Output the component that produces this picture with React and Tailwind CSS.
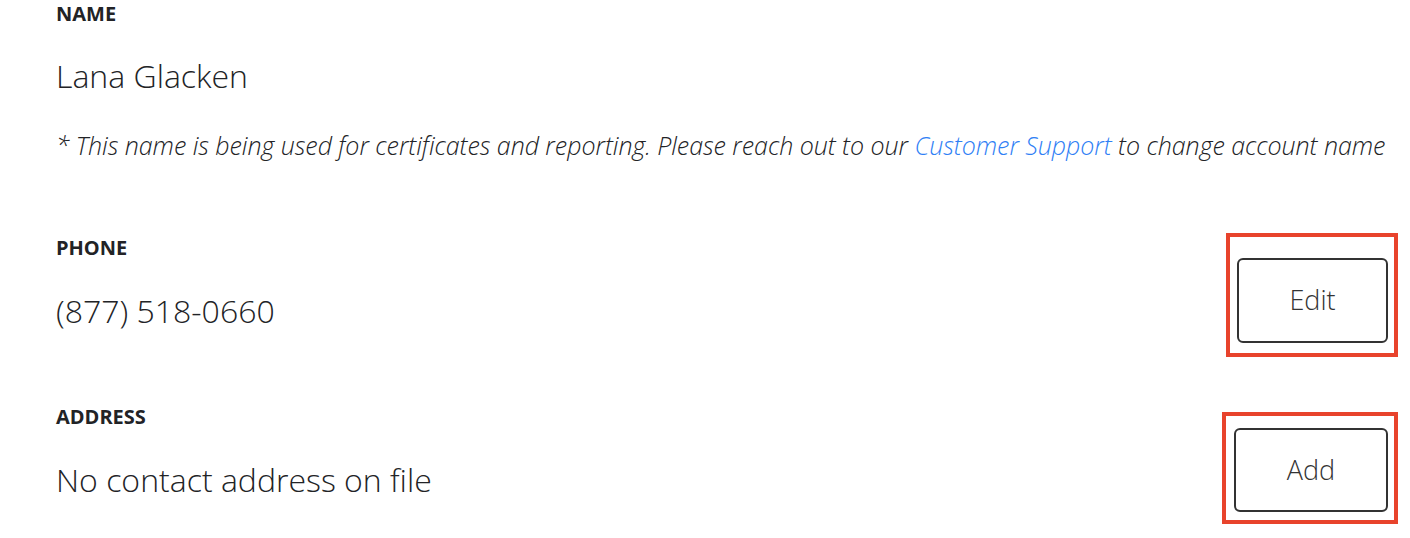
export default function App() {
  const font = { fontFamily: '"Open Sans", "Noto Sans", sans-serif' };
  return (
    <div className="w-[1410px] h-[538px] bg-white text-[#222326] pl-[56px] pr-[12px] pt-[2px] overflow-hidden" style={font}>
      <div className="text-[20px] leading-[24px] font-bold">NAME</div>
      <div className="mt-[30px] text-[32px] leading-[40px] font-light">Lana Glacken</div>
      <div className="mt-[33px] text-[25px] leading-[32px] font-light italic whitespace-nowrap tracking-[-0.05px]">
        * This name is being used for certificates and reporting. Please reach out to our{' '}
        <a className="text-[#2f80f5]">Customer Support</a> to change account name
      </div>

      <div className="mt-[72px] flex justify-between items-start">
        <div className="pt-[3px]">
          <div className="text-[20px] leading-[24px] font-bold">PHONE</div>
          <div className="mt-[31px] text-[32px] leading-[40px] font-light">(877) 518-0660</div>
        </div>
        <div className="border-4 border-[#e8432c] pl-[7px] pt-[21px] pr-[6px] pb-[10px]">
          <button className="w-[151px] h-[85px] border-2 border-[#333] rounded-[6px] text-[27px] font-light text-[#333] flex items-center justify-center">
            Edit
          </button>
        </div>
      </div>

      <div className="mt-[48px] flex justify-between items-start">
        <div>
          <div className="text-[20px] leading-[24px] font-bold">ADDRESS</div>
          <div className="mt-[31px] text-[32px] leading-[40px] font-light">No contact address on file</div>
        </div>
        <div className="mt-[7px] border-4 border-[#e8432c] pl-[8px] pt-[12px] pr-[6px] pb-[8px]">
          <button className="w-[154px] h-[84px] border-2 border-[#333] rounded-[6px] text-[27px] font-light text-[#333] flex items-center justify-center">
            Add
          </button>
        </div>
      </div>
    </div>
  );
}
